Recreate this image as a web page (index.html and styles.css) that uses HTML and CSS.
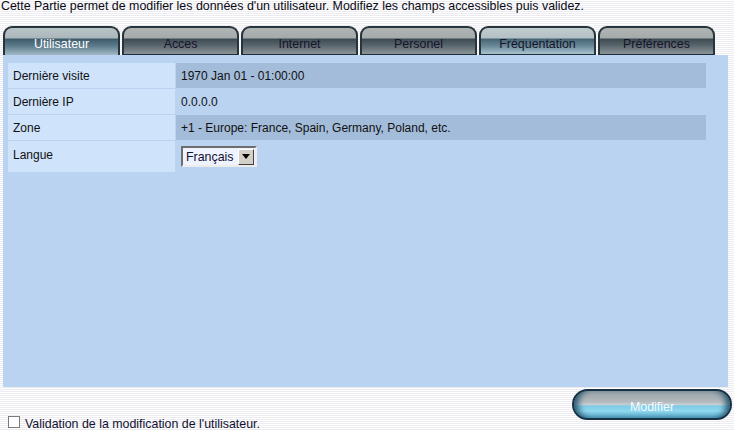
FILE: index.html
```html
<!DOCTYPE html>
<html lang="fr">
<head>
<meta charset="utf-8">
<title>Utilisateur</title>
<link rel="stylesheet" href="styles.css">
</head>
<body>
<p class="intro">Cette Partie permet de modifier les données d'un utilisateur. Modifiez les champs accessibles puis validez.</p>
<div class="tabs">
  <div class="tab active"><span>Utilisateur</span></div>
  <div class="tab"><span>Acces</span></div>
  <div class="tab"><span>Internet</span></div>
  <div class="tab"><span>Personel</span></div>
  <div class="tab hover"><span>Fréquentation</span></div>
  <div class="tab"><span>Préférences</span></div>
</div>
<div class="panel">
  <div class="grid">
    <div class="lbl">Dernière visite</div><div class="val dark">1970 Jan 01 - 01:00:00</div>
    <div class="lbl">Dernière IP</div><div class="val">0.0.0.0</div>
    <div class="lbl">Zone</div><div class="val dark">+1 - Europe: France, Spain, Germany, Poland, etc.</div>
    <div class="lbl top">Langue</div>
    <div class="val">
      <div class="select"><span class="sel-text">Français</span><span class="sel-btn"><svg width="8" height="5" viewBox="0 0 8 5"><path d="M0 0H8L4 5Z" fill="#000"/></svg></span></div>
    </div>
  </div>
</div>
<div class="footer">
  <label class="check"><span class="box"></span>Validation de la modification de l'utilisateur.</label>
  <button class="btn" type="button">Modifier</button>
</div>
</body>
</html>
```
FILE: styles.css
```css
html, body {
  margin: 0;
  padding: 0;
}
body {
  width: 734px;
  height: 430px;
  overflow: hidden;
  font-family: "Liberation Sans", Arial, sans-serif;
  font-size: 12px;
  color: #111;
  background: repeating-linear-gradient(to bottom, #ffffff 0, #ffffff 1px, #ececf0 1px, #ececf0 2px);
}
.intro {
  margin: 0;
  padding: 0 0 0 1px;
  height: 14px;
  line-height: 13px;
  font-size: 12.4px;
  color: #0a0a14;
  white-space: nowrap;
}
.tabs {
  display: flex;
  gap: 2px;
  margin: 12px 0 0 3px;
  width: 713px;
  height: 29px;
}
.tab {
  box-sizing: border-box;
  width: 117px;
  height: 29px;
  border: 2px solid #27343c;
  border-bottom: 1px solid #1e2e38;
  border-radius: 9px 9px 0 0;
  background: linear-gradient(to bottom, #b0b4b4 0, #a5aaaa 10px, #3c4a53 11px, #5c686f 18px, #8b9599 100%);
  text-align: center;
  font-size: 12.4px;
  color: #16142a;
  line-height: 12px;
  padding-top: 10px;
}
.tab.active {
  color: #ffffff;
  border-bottom: none;
  background: linear-gradient(to bottom, #b9c4c7 0, #aab7bb 10px, #3e5b6b 11px, #5c7b8b 18px, #a3bac6 100%);
}
.tab.hover {
  background: linear-gradient(to bottom, #c1ccce 0, #b3c0c4 10px, #456575 11px, #6a8898 18px, #a9c2cf 100%);
}
.panel {
  box-sizing: border-box;
  margin-left: 3px;
  width: 725px;
  height: 332px;
  background: #b9d3f1;
  padding: 8px 0 0 5px;
}
.grid {
  display: grid;
  grid-template-columns: 167px 530px;
  grid-template-rows: 25px 25px 25px 31px;
  gap: 1px;
}
.lbl, .val {
  display: flex;
  align-items: center;
  padding-left: 5px;
  color: #111;
}
.lbl {
  background: #cfe3fb;
}
.lbl.top {
  align-items: flex-start;
  padding-top: 7px;
}
.val {
  background: #b9d3f1;
}
.val.dark {
  background: #a3bcda;
}
.select {
  box-sizing: border-box;
  display: flex;
  align-items: center;
  width: 76px;
  height: 21px;
  border: 2px solid;
  border-color: #6e6e6e #ececec #ececec #6e6e6e;
  background: #eef3fe;
  padding: 0 1px 0 3px;
}
.sel-text {
  flex: 1;
  font-size: 12.4px;
  color: #121030;
}
.sel-btn {
  box-sizing: border-box;
  width: 16px;
  height: 16px;
  display: flex;
  align-items: center;
  justify-content: center;
  background: #d4d0c8;
  border: 1px solid;
  border-color: #ffffff #404040 #404040 #ffffff;
}
.footer {
  display: flex;
  justify-content: space-between;
  align-items: flex-start;
  margin-top: 2px;
}
.check {
  display: flex;
  align-items: center;
  margin: 28px 0 0 8px;
  font-size: 12.4px;
  color: #121030;
  line-height: 14px;
}
.box {
  box-sizing: border-box;
  width: 12px;
  height: 12px;
  border: 1px solid #7b7b7b;
  background: #fff;
  margin-right: 5px;
  margin-top: -4px;
}
.btn {
  box-sizing: border-box;
  width: 160px;
  height: 31px;
  margin-right: 2px;
  border: 2px solid #173246;
  border-radius: 16px;
  background: linear-gradient(to bottom, #98a1a6 0, #b2babe 40%, #c6ced1 50%, #7fcbe5 55%, #8fd8f0 75%, #4f9cbc 100%);
  box-shadow: inset 8px 0 6px -4px #2b5870, inset -8px 0 6px -4px #2b5870;
  color: #f4fbff;
  font-family: "Liberation Sans", Arial, sans-serif;
  font-size: 12.4px;
  padding-top: 5px;
}
```
